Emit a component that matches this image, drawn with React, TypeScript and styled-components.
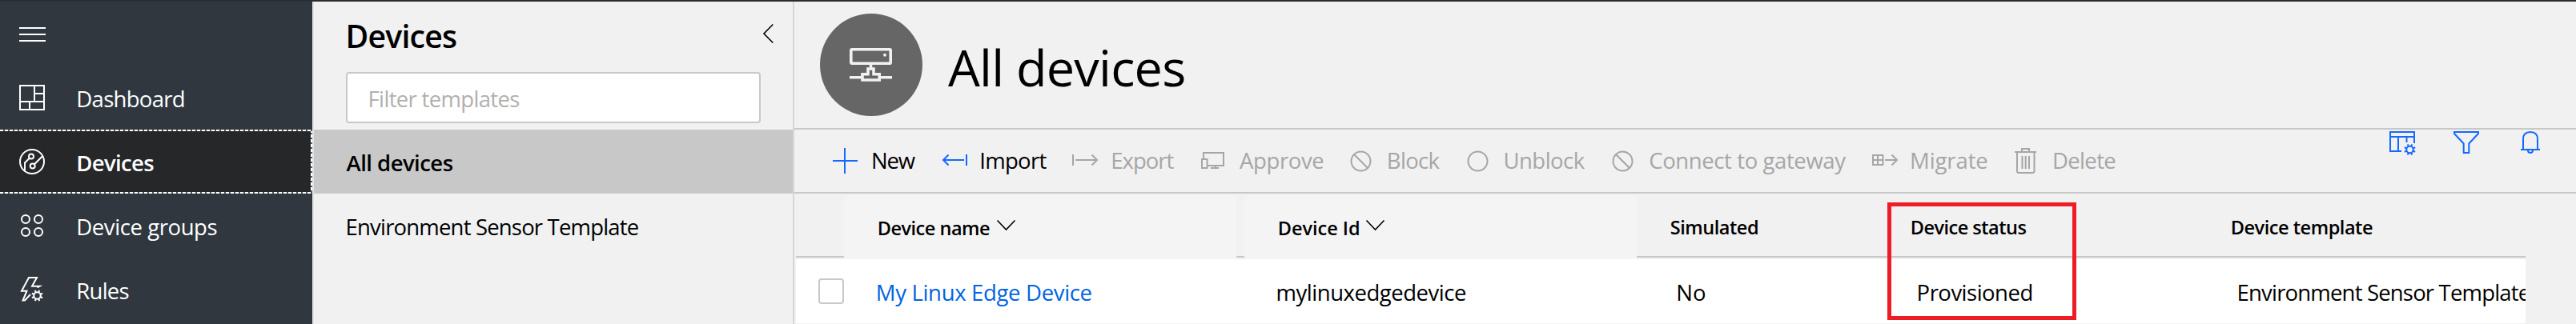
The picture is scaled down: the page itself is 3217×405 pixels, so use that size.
import React from "react";
import styled, { createGlobalStyle } from "styled-components";

const GlobalStyle = createGlobalStyle`
  *, *::before, *::after { box-sizing: border-box; }
  body { margin: 0; background: #f1f1f1; color: #000; font-family: "Open Sans", "Noto Sans", sans-serif; font-size: 27.5px; }
  svg { display: block; flex: none; }
`;

const Page = styled.div`
  display: flex;
  width: 3217px;
  height: 405px;
  overflow: hidden;
  border-top: 2px solid #2a2d31;
  background: #f1f1f1;
`;

const Label = styled.span<{ $spacing: number }>`
  letter-spacing: ${(p) => p.$spacing}px;
  white-space: nowrap;
`;

/* Left navigation */
const Sidebar = styled.nav`
  flex: none;
  width: 392px;
  height: 403px;
  background: #30373f;
  border-right: 2px solid #e2e2e2;
`;

const MenuButton = styled.div`
  height: 80px;
  padding: 32px 0 0 24px;
`;

const dashes = "#fff 0 4px, #55585b 4px 6px";

const NavItem = styled.div<{ $active?: boolean }>`
  display: flex;
  align-items: center;
  height: 80px;
  padding-left: 24px;
  color: #fff;
  font-weight: ${(p) => (p.$active ? 600 : 400)};
  ${(p) =>
    p.$active &&
    `background:
      repeating-linear-gradient(90deg, ${dashes}) 0 0 / 100% 2px no-repeat,
      repeating-linear-gradient(90deg, ${dashes}) 0 100% / 100% 2px no-repeat,
      repeating-linear-gradient(180deg, ${dashes}) 100% 0 / 2px 100% no-repeat,
      #262729;`}
`;

const NavLabel = styled(Label)`
  margin-left: 39.3px;
  padding-top: 3px;
`;

/* Template list */
const Panel = styled.section`
  flex: none;
  width: 600px;
  border-right: 2px solid #d6d6d6;
`;

const PanelHeader = styled.header`
  display: flex;
  justify-content: space-between;
  height: 88px;
  padding: 0 24px 0 39.6px;
`;

const PanelTitle = styled(Label)`
  font-size: 39.2px;
  font-weight: 600;
  line-height: 85px;
`;

const PanelChevron = styled.div`
  padding-top: 28px;
`;

const FilterBox = styled.div`
  width: 518px;
  height: 64px;
  margin: 0 0 8px 40px;
  padding-left: 25.6px;
  border: 2px solid #c8c8c8;
  border-radius: 4px;
  background: #fff;
  color: #b0b0b0;
  line-height: 63px;
`;

const TemplateItem = styled.div<{ $active?: boolean }>`
  height: 80px;
  padding-left: ${(p) => (p.$active ? 40.5 : 39.6)}px;
  line-height: 83px;
  font-weight: ${(p) => (p.$active ? 600 : 400)};
  background: ${(p) => (p.$active ? "#c8c8c8" : "transparent")};
`;

/* Main area */
const Main = styled.main`
  flex: 1;
  min-width: 0;
`;

const Hero = styled.header`
  display: flex;
  height: 160px;
  padding: 15px 0 0 32px;
  border-bottom: 2px solid #c8c8c8;
`;

const Avatar = styled.div`
  display: flex;
  flex: none;
  align-items: center;
  justify-content: center;
  width: 128px;
  height: 128px;
  border-radius: 50%;
  background: #666;
`;

const HeroTitle = styled(Label)`
  margin-left: 32px;
  font-size: 63px;
  line-height: 134px;
`;

const Toolbar = styled.div`
  display: flex;
  justify-content: space-between;
  height: 80px;
  padding: 0 41px 0 48px;
  border-bottom: 2px solid #c8c8c8;
`;

const Actions = styled.div`
  display: flex;
  align-items: center;
  height: 78px;
`;

const Action = styled.div<{ $width: number; $enabled?: boolean }>`
  display: flex;
  align-items: center;
  width: ${(p) => p.$width}px;
  color: ${(p) => (p.$enabled ? "#000" : "#a6a6a6")};
`;

const ActionIcon = styled.div<{ $slot: number; $enabled?: boolean }>`
  flex: none;
  width: ${(p) => p.$slot}px;
  color: ${(p) => (p.$enabled ? "#146aff" : "#a6a6a6")};
`;

const ActionLabel = styled(Label)`
  margin-left: 1px;
  line-height: 36px;
`;

const ViewTools = styled.div`
  display: flex;
  gap: 48px;
  padding-top: 2px;
  color: #146aff;
`;

const Table = styled.div`
  position: relative;
  width: 2160px;
  margin-left: 2px;
`;

const columns = "60px 490px 10px 490px 300px 400px 410px";

const HeadRow = styled.div`
  display: grid;
  grid-template-columns: ${columns};
  height: 82px;
`;

const HeadCell = styled.div<{ $sortable?: boolean }>`
  display: flex;
  align-items: center;
  height: 80px;
  margin-top: ${(p) => (p.$sortable ? 2 : 0)}px;
  padding: ${(p) => (p.$sortable ? "0" : "6px")} 0 0 41.7px;
  border-bottom: ${(p) => (p.$sortable ? "none" : "2px solid #c8c8c8")};
  background: ${(p) => (p.$sortable ? "#f4f4f4" : "transparent")};
  font-size: 23.5px;
  font-weight: 600;
`;

const SortLabel = styled(Label)<{ $width: number }>`
  width: ${(p) => p.$width}px;
  padding-top: 2px;
`;

const Row = styled.div`
  display: grid;
  grid-template-columns: ${columns};
  height: 80px;
  overflow: hidden;
  background: #fff;
`;

const Cell = styled.div<{ $inset: number; $link?: boolean }>`
  padding-left: ${(p) => p.$inset}px;
  line-height: 83px;
  color: ${(p) => (p.$link ? "#0064e1" : "#000")};
  overflow: hidden;
`;

const Checkbox = styled.div`
  width: 32px;
  height: 32px;
  margin: 24px 0 0 28px;
  border: 2px solid #c8c8c8;
  border-radius: 4px;
  background: #fff;
`;

const Highlight = styled.div`
  position: absolute;
  left: 1363px;
  top: 11px;
  width: 236px;
  height: 147px;
  border: 5px solid #ee1c25;
`;

type IconProps = { w: number; h: number; stroke?: number; children: React.ReactNode };
const Icon = ({ w, h, stroke = 2, children }: IconProps) => (
  <svg width={w} height={h} viewBox={`0 0 ${w} ${h}`} fill="none" stroke="currentColor" strokeWidth={stroke} overflow="visible">
    {children}
  </svg>
);

const Gear = ({ x, y }: { x: number; y: number }) => (
  <g transform={`translate(${x} ${y})`}>
    <circle r="4.2" />
    {[22.5, 67.5, 112.5, 157.5, 202.5, 247.5, 292.5, 337.5].map((a) => (
      <path key={a} d="M0 -4.6V-7.2" transform={`rotate(${a})`} />
    ))}
  </g>
);

const Forbidden = () => (
  <Icon w={27} h={28}>
    <circle cx="13.5" cy="14.5" r="12" />
    <path d="M5 6L22 23" />
  </Icon>
);

const SortChevron = () => (
  <Icon w={23} h={28} stroke={1.6}>
    <path d="M0.5 5.5L11.5 17L22.5 5.5" />
  </Icon>
);

const nav = [
  {
    text: "Dashboard", spacing: -0.7,
    icon: <path d="M1 1H31V31H1ZM19 1V21M19 11H31M1 21H31M13 21V31" />,
  },
  {
    text: "Devices", spacing: -0.66, active: true,
    icon: (
      <g>
        <circle cx="16" cy="16" r="15" />
        <circle cx="15" cy="9.5" r="3" />
        <circle cx="16.7" cy="21.5" r="3" />
        <path d="M12.8 11.8L7 17.5V27.5M19 19.3L29.5 8.8" />
      </g>
    ),
  },
  {
    text: "Device groups", spacing: -0.42,
    icon: (
      <g>
        <circle cx="8" cy="8" r="5" />
        <circle cx="24" cy="8" r="5" />
        <circle cx="8" cy="24" r="5" />
        <circle cx="24" cy="24" r="5" />
      </g>
    ),
  },
  {
    text: "Rules", spacing: -0.74,
    icon: (
      <g>
        <path d="M22.5 13.5L25.5 11.8H16L22 1H12L3 17.7H9.5L4.5 29.5H7L14 22" />
        <Gear x={22.5} y={23.5} />
      </g>
    ),
  },
];

const actions = [
  { text: "New", spacing: -1.2, width: 136, slot: 47, enabled: true,
    icon: <Icon w={32} h={32}><path d="M15 0V32M0 16H31" /></Icon> },
  { text: "Import", spacing: -0.72, width: 163, slot: 46.3, enabled: true,
    icon: <Icon w={32} h={16}><path d="M31 0V14M28 7H2M8.5 0.5L2 7L8.5 13.5" /></Icon> },
  { text: "Export", spacing: -1.02, width: 161, slot: 47.3,
    icon: <Icon w={33} h={16}><path d="M1 0V14M4 7H31M24.5 0.5L31 7L24.5 13.5" /></Icon> },
  { text: "Approve", spacing: -0.37, width: 186, slot: 47,
    icon: <Icon w={29} h={22}><path d="M3 9V1H28V17H8M1 9H7.5V20H1ZM18 17V20M12 20H22" /></Icon> },
  { text: "Block", spacing: -0.67, width: 146, slot: 44.8, icon: <Forbidden /> },
  { text: "Unblock", spacing: -0.52, width: 181, slot: 44.5,
    icon: <Icon w={27} h={28}><circle cx="13.5" cy="14.5" r="12" /></Icon> },
  { text: "Connect to gateway", spacing: -0.4, width: 324, slot: 45.3, icon: <Forbidden /> },
  { text: "Migrate", spacing: -0.1, width: 179, slot: 47,
    icon: <Icon w={33} h={16}><path d="M2 1H14.5V13H2ZM8 1V13M2 7H14.5M17 7H31.5M25.5 0.5L32 7L25.5 13.5" /></Icon> },
  { text: "Delete", spacing: -0.66, width: 140, slot: 46,
    icon: <Icon w={27} h={32}><path d="M0 5H27M9 5V1H18V5M3 5V29Q3 31 5 31H22.5Q24.5 31 24.5 29V5M9.5 10V26M13.7 10V26M18 10V26" /></Icon> },
];

export default function App() {
  return (
    <Page>
      <GlobalStyle />
      <Sidebar>
        <MenuButton>
          <svg width="33" height="18" viewBox="0 0 33 18" stroke="#fff" strokeWidth="2">
            <path d="M0 1H33M0 9H33M0 17H33" />
          </svg>
        </MenuButton>
        {nav.map((n) => (
          <NavItem key={n.text} $active={n.active}>
            <Icon w={32} h={32}>{n.icon}</Icon>
            <NavLabel $spacing={n.spacing}>{n.text}</NavLabel>
          </NavItem>
        ))}
      </Sidebar>

      <Panel>
        <PanelHeader>
          <PanelTitle $spacing={-0.8}>Devices</PanelTitle>
          <PanelChevron>
            <Icon w={13} h={24} stroke={1.6}><path d="M12.3 0.5L1 12L12.3 23.5" /></Icon>
          </PanelChevron>
        </PanelHeader>
        <FilterBox><Label $spacing={-0.67}>Filter templates</Label></FilterBox>
        <TemplateItem $active><Label $spacing={-0.53}>All devices</Label></TemplateItem>
        <TemplateItem><Label $spacing={-0.82}>Environment Sensor Template</Label></TemplateItem>
      </Panel>

      <Main>
        <Hero>
          <Avatar>
            <svg width="54" height="42" viewBox="0 0 54 42" fill="none" stroke="#f1f1f1" strokeWidth="3.6">
              <rect x="1.8" y="1.8" width="49.4" height="17.4" rx="1" />
              <circle cx="44" cy="8.8" r="2" fill="#f1f1f1" stroke="none" />
              <path d="M26.5 20V25M23 26H30V32.8H37.2V40H16V32.8H23ZM0 36.8H15M38 36.8H53" />
            </svg>
          </Avatar>
          <HeroTitle $spacing={-0.77}>All devices</HeroTitle>
        </Hero>

        <Toolbar>
          <Actions>
            {actions.map((a) => (
              <Action key={a.text} $width={a.width} $enabled={a.enabled}>
                <ActionIcon $slot={a.slot} $enabled={a.enabled}>{a.icon}</ActionIcon>
                <ActionLabel $spacing={a.spacing}>{a.text}</ActionLabel>
              </Action>
            ))}
          </Actions>
          <ViewTools>
            <Icon w={32} h={32}>
              <path d="M15 25H1V1H31V15M1 7H31M11 7V25M21.5 7V14" />
              <Gear x={25.5} y={23} />
            </Icon>
            <Icon w={32} h={32}>
              <path d="M1 1H31V3L19.3 15.5V27H12.7V15.5L1 3Z" />
            </Icon>
            <Icon w={32} h={32}>
              <path d="M7 23V10Q7 1 16 1Q25 1 25 10V23M4 23H28M13 24Q13 27 16 27Q19 27 19 24" />
            </Icon>
          </ViewTools>
        </Toolbar>

        <Table>
          <HeadRow>
            <HeadCell />
            <HeadCell $sortable>
              <SortLabel $width={149} $spacing={-0.49}>Device name</SortLabel>
              <SortChevron />
            </HeadCell>
            <HeadCell />
            <HeadCell $sortable>
              <SortLabel $width={110} $spacing={0}>Device Id</SortLabel>
              <SortChevron />
            </HeadCell>
            <HeadCell><Label $spacing={-0.45}>Simulated</Label></HeadCell>
            <HeadCell><Label $spacing={-0.5}>Device status</Label></HeadCell>
            <HeadCell><Label $spacing={-0.45}>Device template</Label></HeadCell>
          </HeadRow>
          <Row>
            <Checkbox />
            <Cell $inset={39.8} $link><Label $spacing={-0.33}>My Linux Edge Device</Label></Cell>
            <span />
            <Cell $inset={39.6}><Label $spacing={-0.48}>mylinuxedgedevice</Label></Cell>
            <Cell $inset={49.3}><Label $spacing={0}>No</Label></Cell>
            <Cell $inset={49.6}><Label $spacing={-0.51}>Provisioned</Label></Cell>
            <Cell $inset={49.6}><Label $spacing={-0.82}>Environment Sensor Template</Label></Cell>
          </Row>
          <Highlight />
        </Table>
      </Main>
    </Page>
  );
}
